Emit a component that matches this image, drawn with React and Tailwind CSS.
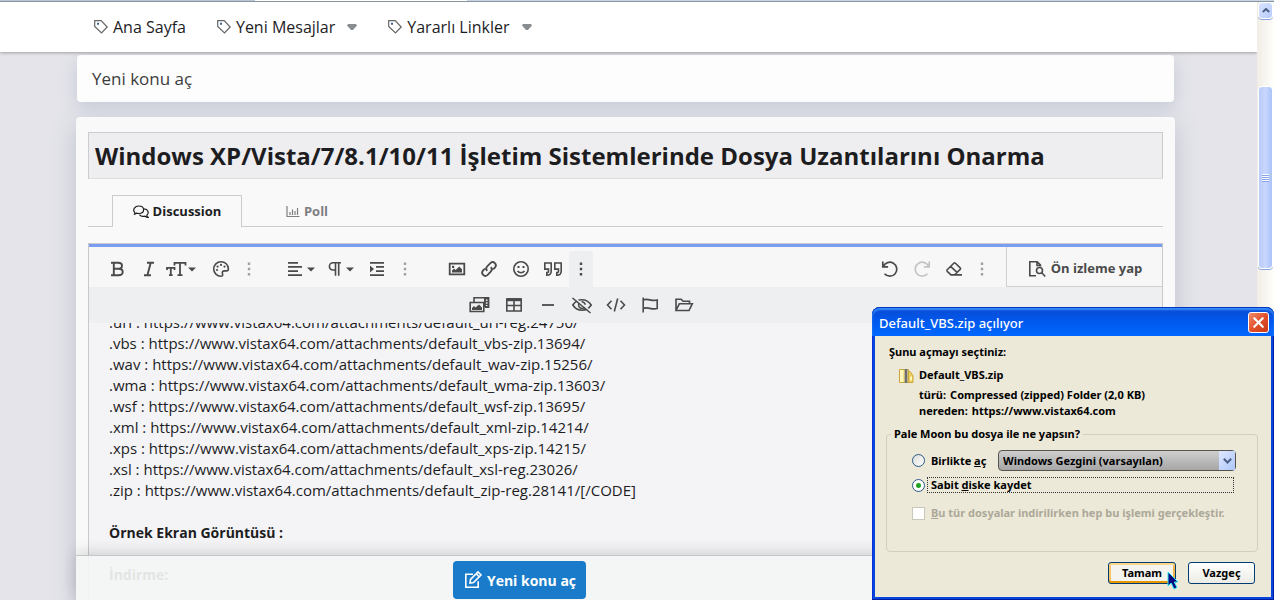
import { X } from "lucide-react";

const links = [
  ".url : https://www.vistax64.com/attachments/default_url-reg.24750/",
  ".vbs : https://www.vistax64.com/attachments/default_vbs-zip.13694/",
  ".wav : https://www.vistax64.com/attachments/default_wav-zip.15256/",
  ".wma : https://www.vistax64.com/attachments/default_wma-zip.13603/",
  ".wsf : https://www.vistax64.com/attachments/default_wsf-zip.13695/",
  ".xml : https://www.vistax64.com/attachments/default_xml-zip.14214/",
  ".xps : https://www.vistax64.com/attachments/default_xps-zip.14215/",
  ".xsl : https://www.vistax64.com/attachments/default_xsl-reg.23026/",
  ".zip : https://www.vistax64.com/attachments/default_zip-reg.28141/[/CODE]",
];

function Icon({ children, className = "size-5", box = "0 0 20 20" }) {
  return (
    <svg
      viewBox={box}
      className={className}
      fill="none"
      stroke="currentColor"
      strokeWidth="1.6"
      aria-hidden="true"
    >
      {children}
    </svg>
  );
}

const icons = {
  bold: (
    <Icon>
      <path d="M4 3.8h7.2c2.6 0 3.8 1.2 3.8 3s-1.3 3-3.8 3H6.500M4 16.200h7.500c2.800 0 4.200-1.200 4.200-3.200s-1.500-3.200-4.200-3.200M6.800 3.800v12.400" strokeWidth="1.9" />
    </Icon>
  ),
  italic: (
    <Icon>
      <path d="M8 3.800h7M5 16.200h7M11.700 3.800 8.400 16.200" strokeWidth="1.9" />
    </Icon>
  ),
  size: (
    <Icon className="h-5 w-8" box="0 0 32 20">
      <path d="M9.500 6.500V3.800h11v2.700M15 3.800v12.400M12.500 16.200h5M2 11V8.900h7.500V11M5.800 8.900v7.300M4 16.200h3.600" strokeWidth="1.8" />
      <path d="M23 8.500h8l-4 4z" fill="currentColor" stroke="none" />
    </Icon>
  ),
  palette: (
    <Icon>
      <path d="M10 2.700a7.300 7.300 0 1 0 0 14.600c1.700 0 2-1.300 1.500-2.400-.7-1.600.2-3 1.900-3h2.100c1.200 0 1.900-.7 1.900-1.900 0-4.200-3.300-7.300-7.400-7.300z" />
      <g fill="currentColor" stroke="none">
        <circle cx="6" cy="11" r="1.100" />
        <circle cx="6.600" cy="7.600" r="1.100" />
        <circle cx="10" cy="5.900" r="1.100" />
        <circle cx="13.500" cy="7.600" r="1.100" />
      </g>
    </Icon>
  ),
  dots: (
    <Icon>
      <path d="M8.800 3.500h2.400v2.400H8.800zM8.800 8.800h2.400v2.400H8.800zM8.800 14.100h2.400v2.400H8.800z" fill="currentColor" stroke="none" />
    </Icon>
  ),
  align: (
    <Icon className="h-5 w-8" box="0 0 32 20">
      <path d="M3 3.800h10M3 7.900h14M3 12.100h10M3 16.200h14" strokeWidth="1.8" />
      <path d="M22 8.500h8l-4 4z" fill="currentColor" stroke="none" />
    </Icon>
  ),
  paragraph: (
    <Icon className="h-5 w-8" box="0 0 32 20">
      <path d="M16 3.800H8a3.600 3.600 0 0 0 0 7.200h2.500M10.500 3.800v13M13.700 3.800v13" />
      <path d="M21 8.500h8l-4 4z" fill="currentColor" stroke="none" />
    </Icon>
  ),
  indent: (
    <Icon>
      <path d="M3 3.800h14M9 7.900h8M9 12.100h8M3 16.200h14" strokeWidth="1.8" />
      <path d="M3 6.500v7L7 10z" fill="currentColor" stroke="none" />
    </Icon>
  ),
  image: (
    <Icon>
      <path d="M2.700 4.700h14.600v10.600H2.700z" strokeWidth="1.8" />
      <path d="M5 13.500v-2l2-2 1.600 1.600 3.600-3.600 2.800 2.800v3.200zM5 6.800h2.200V9H5z" fill="currentColor" stroke="none" />
    </Icon>
  ),
  link: (
    <Icon>
      <path d="M8.200 11.800a3.200 3.200 0 0 1 0-4.500l3.400-3.400a3.200 3.200 0 0 1 4.500 4.500l-2 2M11.800 8.200a3.200 3.200 0 0 1 0 4.500l-3.400 3.400a3.200 3.200 0 0 1-4.500-4.500l2-2" strokeWidth="1.8" />
    </Icon>
  ),
  smile: (
    <Icon>
      <circle cx="10" cy="10" r="7.200" />
      <path d="M6.500 12c1.800 2.300 5.200 2.300 7 0" />
      <path d="M6.500 7h2v2h-2zM11.500 7h2v2h-2z" fill="currentColor" stroke="none" />
    </Icon>
  ),
  quote: (
    <Icon>
      <path d="M1.800 4h6.400v8c0 2.500-1.600 4.300-4.400 4.300v-2.700c1.200 0 1.700-.6 1.700-1.700v-1.800H1.800zM11.800 4h6.400v8c0 2.500-1.600 4.300-4.400 4.300v-2.700c1.200 0 1.700-.6 1.700-1.700v-1.800h-3.700z" />
    </Icon>
  ),
  undo: (
    <Icon>
      <path d="M2.800 2.500v5.300h5.300M3.300 7.600a7 7 0 1 1 1.200 7.200" strokeWidth="1.7" />
    </Icon>
  ),
  redo: (
    <Icon>
      <path d="M17.200 2.500v5.300h-5.300M16.700 7.600a7 7 0 1 0-1.200 7.200" strokeWidth="1.7" />
    </Icon>
  ),
  eraser: (
    <Icon>
      <path d="m7 15.800-3.800-3.500c-.5-.5-.5-1 0-1.500l6.600-6.500c.5-.5 1.100-.5 1.600 0l4.800 4.600c.5.500.5 1 0 1.500l-5.500 5.400M6.300 15.900H18M6.800 7.600l6.500 6" />
    </Icon>
  ),
  preview: (
    <Icon>
      <path d="M9 16.800H2.800V2.800h7.400l3.300 3.300v1.400M10 3v3.500h3.500" />
      <circle cx="12.500" cy="11.500" r="3" />
      <path d="m14.700 13.700 3.600 3.800" />
    </Icon>
  ),
  media: (
    <Icon className="h-5 w-6" box="0 0 24 20">
      <path d="M6 7V2.800h14.600v9.500H17M2.200 7.500h13.600v9H2.200z" />
      <path d="M4 15v-2l2-2 1.500 1.500L11 9.500l3 3V15zM16 2.800h5v9.500h-5z" fill="currentColor" stroke="none" />
      <path d="M18.700 4.500v6.500" stroke="#eeeff1" strokeDasharray="1.500 1.200" />
    </Icon>
  ),
  table: (
    <Icon>
      <path d="M2.800 4h14.400v12H2.800zM2.800 10.500h14.400M10 5v11" />
      <path d="M2.800 3.200h14.400v3H2.800z" fill="currentColor" stroke="none" />
    </Icon>
  ),
  rule: (
    <Icon>
      <path d="M4 10h12" strokeWidth="1.8" />
    </Icon>
  ),
  hidden: (
    <Icon className="h-5 w-6" box="0 0 24 20">
      <path d="M2.800 10c4.600-7 13.800-7 18.400 0-4.600 7-13.800 7-18.400 0z" />
      <path d="M9 8.500a3.300 3.300 0 0 0 6 3M11.500 6.800a3.300 3.300 0 0 1 3.700 3" />
      <path d="m3.500 2 18 15" stroke="#eeeff1" />
      <path d="m2.500 3 18 15" />
    </Icon>
  ),
  code: (
    <Icon>
      <path d="m5.500 5.800-4 4.200 4 4.200M14.500 5.800l4 4.200-4 4.200M11.700 3.500l-3.400 13" />
    </Icon>
  ),
  flag: (
    <Icon>
      <path d="M3.200 2.500v15M3.200 5c4.500-2.200 8.500 1.800 14 0v8.500c-5.500 1.800-9.500-2.200-14 0" />
    </Icon>
  ),
  folder: (
    <Icon>
      <path d="M2 15.500V4.300h5.200L9 6.200h6.500v2.600M2 15.500l3.300-6.700h13L15 15.500z" />
    </Icon>
  ),
};

function ToolButton({ icon, label, className = "w-8 text-[#4a4a4a]" }) {
  return (
    <button
      type="button"
      aria-label={label}
      className={`flex h-9 shrink-0 items-center justify-center ${className}`}
    >
      {icons[icon]}
    </button>
  );
}

function NavItem({ label, menu }) {
  return (
    <a href="#" className="flex items-center gap-1">
      <svg viewBox="0 0 16 16" className="size-4 text-[#666]" fill="none" stroke="currentColor" strokeWidth="1.2">
        <path d="M1.700 1.700h6.500l6 6.300-5.700 6-6.800-6.500z" />
        <path d="M4 3.700h2v2H4z" fill="#3b6290" stroke="none" />
      </svg>
      <span>{label}</span>
      {menu && (
        <svg viewBox="0 0 10 6" className="ml-2 h-[6px] w-[10px] text-[#8a8d90]" fill="currentColor">
          <path d="M1 0h8l1 1.500L6 6H4L0 1.500z" />
        </svg>
      )}
    </a>
  );
}

function Toolbar() {
  return (
    <div className="shrink-0 border-t-[3px] border-[#7c9ef2]">
      <div className="flex h-10 items-stretch bg-[#f7f7f7]">
        <div className="flex flex-1 items-end gap-6 pl-3">
          <div className="flex">
            <ToolButton icon="bold" label="Kalın" />
            <ToolButton icon="italic" label="İtalik" />
            <ToolButton icon="size" label="Yazı boyutu" className="mr-2 w-8 text-[#4a4a4a]" />
            <ToolButton icon="palette" label="Renk" />
            <ToolButton icon="dots" label="Diğer yazı seçenekleri" className="w-6 text-[#a0a0a0]" />
          </div>
          <div className="flex">
            <ToolButton icon="align" label="Hizalama" className="mr-2 w-8 text-[#4a4a4a]" />
            <ToolButton icon="paragraph" label="Paragraf" className="mr-1 w-8 text-[#4a4a4a]" />
            <ToolButton icon="indent" label="Girinti" />
            <ToolButton icon="dots" label="Diğer paragraf seçenekleri" className="w-6 text-[#a0a0a0]" />
          </div>
          <div className="flex">
            <ToolButton icon="image" label="Resim ekle" />
            <ToolButton icon="link" label="Bağlantı ekle" />
            <ToolButton icon="smile" label="İfadeler" />
            <ToolButton icon="quote" label="Alıntı" />
            <ToolButton icon="dots" label="Ekle" className="w-6 rounded-t bg-[#eeeff1] text-[#4a4a4a]" />
          </div>
          <div className="mr-3 ml-auto flex">
            <ToolButton icon="undo" label="Geri al" />
            <ToolButton icon="redo" label="Yinele" className="w-8 text-[#c4c4c4]" />
            <ToolButton icon="eraser" label="Biçimi temizle" />
            <ToolButton icon="dots" label="Diğer" className="w-6 text-[#a0a0a0]" />
          </div>
        </div>
        <button
          type="button"
          className="flex w-[156px] items-center justify-center gap-1 border-b border-l border-[#d0d0d0] pt-1 text-[13px] font-bold text-[#4a4a4a]"
        >
          {icons.preview}
          Ön izleme yap
        </button>
      </div>
      <div className="flex h-9 items-center bg-[#eeeff1] pl-[374px]">
        <ToolButton icon="media" label="Medya" className="w-[34px] text-[#4a4a4a]" />
        <ToolButton icon="table" label="Tablo" className="w-[34px] text-[#4a4a4a]" />
        <ToolButton icon="rule" label="Yatay çizgi" className="w-[34px] text-[#4a4a4a]" />
        <ToolButton icon="hidden" label="Spoiler" className="w-[34px] text-[#4a4a4a]" />
        <ToolButton icon="code" label="Kod" className="w-[34px] text-[#4a4a4a]" />
        <ToolButton icon="flag" label="Bayrak" className="w-[34px] text-[#4a4a4a]" />
        <ToolButton icon="folder" label="Taslaklar" className="w-[34px] text-[#4a4a4a]" />
      </div>
    </div>
  );
}

function Composer() {
  return (
    <main className="relative mr-[82px] ml-[76px] flex min-h-0 flex-1 flex-col rounded-t bg-[#f9f9f9] px-3 pt-[15px] shadow-[0_8px_24px_#bfc2cd]">
      <input
        aria-label="Konu başlığı"
        spellCheck={false}
        defaultValue="Windows XP/Vista/7/8.1/10/11 İşletim Sistemlerinde Dosya Uzantılarını Onarma"
        className="h-[47px] w-full shrink-0 border border-[#cccccf] border-b-[#dddde0] bg-[#eeeef1] px-[6px] text-[24px] font-bold text-[#1d1d1f] outline-none"
      />
      <div role="tablist" className="mt-4 flex h-8 shrink-0 text-[13px] font-bold">
        <span className="w-6 border-b border-[#ccc]" />
        <button
          type="button"
          role="tab"
          aria-selected="true"
          className="flex w-[130px] items-center justify-center gap-1 border border-b-0 border-[#ccc] pt-px text-[#1d1d1f]"
        >
          <svg viewBox="0 0 16 14" className="h-[14px] w-4" fill="none" stroke="currentColor" strokeWidth="1.2">
            <path d="M1 9.500c1-.7 1-1.300.8-1.800C-.8 4.500 2 1 5.800 1c6.400 0 6.400 7.500 0 7.500-1 0-1.500-.1-2.200-.4-.8.8-1.700 1.300-2.600 1.400z" />
            <path d="M11 3.800c4 .2 5.500 4 2.800 6.300 0 1 .5 1.600 1.200 2.200-1.200 0-2-.3-3-1.100-2.600.6-4.600 0-5.500-1.600" />
          </svg>
          Discussion
        </button>
        <div className="flex flex-1 border-b border-[#ccc]">
          <button
            type="button"
            role="tab"
            aria-selected="false"
            className="flex w-[130px] items-center justify-center gap-1 pt-[2px] text-[#7e7e82]"
          >
            <svg viewBox="0 0 14 12" className="h-3 w-[14px]" fill="none" stroke="currentColor" strokeWidth="1.2">
              <path d="M1 0v10.500h12.500M4 9V6M6.500 9V3.500M9 9V5M11.500 9V2" />
            </svg>
            Poll
          </button>
        </div>
      </div>
      <div className="mt-4 flex min-h-0 flex-1 flex-col border border-b-0 border-[#c9c9cc]">
        <Toolbar />
        <div className="min-h-0 flex-1 overflow-hidden bg-[#f4f4f7] px-5">
          <div
            contentEditable
            suppressContentEditableWarning
            spellCheck={false}
            role="textbox"
            aria-multiline="true"
            aria-label="Mesaj"
            className="-mt-[11px] text-[15px] leading-[21px] text-[#1d1d1f] outline-none"
          >
            {links.map((line) => (
              <p key={line}>{line}</p>
            ))}
            <p className="mt-[21px] text-[14px] font-bold">Örnek Ekran Görüntüsü :</p>
            <p className="mt-[21px] text-[14px] font-bold">İndirme:</p>
          </div>
        </div>
      </div>
      <div className="absolute inset-x-0 bottom-0 flex h-[45px] items-start border-t border-[#c6c6c8] bg-[#f3f5f4]/92 pt-[5px] pl-[377px] shadow-[0_-2px_14px_rgba(0,0,0,0.16)]">
        <button
          type="button"
          className="flex h-[38px] w-[133px] items-center justify-center gap-1 rounded bg-[#197bc9] text-[14px] font-bold text-white"
        >
          <Icon>
            <path d="M10 4.200H2.800v13h12.400v-6" />
            <path d="m7 13 .5-3.500L15 2l3 3-7.500 7.500zM13.300 3.800l2.900 2.900" />
          </Icon>
          Yeni konu aç
        </button>
      </div>
    </main>
  );
}

function Scrollbar() {
  return (
    <div className="w-[17px] shrink-0 bg-gradient-to-r from-[#f0ede5] to-[#fefefb] px-px">
      <div className="flex h-[17px] items-center justify-center rounded-sm border border-white bg-gradient-to-br from-[#d8e4ff] to-[#b7cbfb] shadow-[0_1px_0_#8aa6dc]">
        <svg viewBox="0 0 8 5" className="h-[5px] w-2" fill="none" stroke="#4d6185" strokeWidth="2">
          <path d="m.8 4 3.200-3 3.200 3" />
        </svg>
      </div>
      <div className="mt-[67px] flex h-[183px] flex-col items-center justify-center rounded-sm border border-white bg-gradient-to-r from-[#b9cbfb] via-[#c8d7fd] to-[#abc3f9] shadow-[0_1px_0_#8aa6dc]">
        {[0, 1, 2, 3].map((n) => (
          <span key={n} className="h-[2px] w-[7px] border-b border-[#86a5e8] bg-white" />
        ))}
      </div>
    </div>
  );
}

function DownloadDialog() {
  return (
    <section
      role="dialog"
      aria-labelledby="dialog-title"
      className="absolute right-0 bottom-0 flex h-[293px] w-[402px] flex-col rounded-t-lg bg-[#0646dc] px-[3px] pb-[3px] font-['Noto_Sans',sans-serif] text-[11px] leading-4 font-bold text-black shadow-[inset_-1px_-1px_0_#001ea0,inset_1px_1px_0_#0831d9]"
    >
      <header className="-mx-[3px] flex h-[29px] shrink-0 items-center justify-between rounded-t-lg bg-gradient-to-b from-[#0a4bd0] via-[#0058ee] to-[#0068ff] pt-[2px] pr-[5px] pl-[7px] shadow-[inset_0_1px_0_#0037b8,inset_0_3px_2px_#3c8cff]">
        <h2 id="dialog-title" className="text-[13px] font-medium text-white">
          Default_VBS.zip açılıyor
        </h2>
        <button
          type="button"
          aria-label="Kapat"
          className="flex size-[21px] items-center justify-center rounded-[3px] border border-white bg-gradient-to-br from-[#f0896a] via-[#e2502c] to-[#c93a12] text-white"
        >
          <X size={17} strokeWidth={3} />
        </button>
      </header>
      <form className="flex flex-1 flex-col bg-[#ece9d8] pt-2 pr-[13px] pl-[11px]">
        <p className="pl-[3px]">Şunu açmayı seçtiniz:</p>
        <div className="mt-[7px] flex pl-[12px]">
          <svg viewBox="0 0 16 16" className="mt-px mr-[5px] size-4">
            <path d="M1.500 1.500h9v13h-9z" fill="#f7e58a" stroke="#c9a63c" />
            <path d="M2 2h3v12H2z" fill="#fdf6bd" />
            <path d="M10.500 3.500h1.500l3 4v7h-4.500z" fill="#edcf5c" stroke="#c9a63c" />
            <path d="M12 8.500h2v4h-2z" fill="#fdf6bd" />
            <path d="M8 1v14" stroke="#8f8f8f" strokeWidth="3" />
            <path d="M8 1.500v13" stroke="#3f3f3f" strokeWidth="1.6" strokeDasharray="1 1" />
          </svg>
          <div>
            <p className="mb-1">Default_VBS.zip</p>
            <dl>
              <div className="flex gap-1">
                <dt>türü:</dt>
                <dd>Compressed (zipped) Folder (2,0 KB)</dd>
              </div>
              <div className="flex gap-1">
                <dt>nereden:</dt>
                <dd>https://www.vistax64.com</dd>
              </div>
            </dl>
          </div>
        </div>
        <fieldset className="mt-[7px] h-[126px] min-w-0 rounded border border-[#d0d0bf]">
          <legend className="ml-1 px-[3px]">Pale Moon bu dosya ile ne yapsın?</legend>
          <div className="mt-2 flex h-[21px] items-center pl-[25px]">
            <input
              id="open-with"
              type="radio"
              name="action"
              className="mr-[6px] size-[13px] appearance-none rounded-full border border-[#2a5a88] bg-gradient-to-br from-[#dcdcd7] to-white"
            />
            <label htmlFor="open-with" className="w-[67px]">
              Birlikte <span className="underline">a</span>ç
            </label>
            <div className="relative">
              <select
                aria-label="Uygulama"
                className="block h-[21px] w-[238px] appearance-none rounded-sm border border-[#55544f] bg-gradient-to-b from-[#cfcfcf] to-[#a6a6a6] pl-1 font-bold"
              >
                <option>Windows Gezgini (varsayılan)</option>
              </select>
              <span className="pointer-events-none absolute top-px right-px flex h-[19px] w-4 items-center justify-center bg-gradient-to-br from-[#dfe8ff] to-[#aec6fa]">
                <svg viewBox="0 0 9 6" className="h-[6px] w-[9px]" fill="none" stroke="#4d6185" strokeWidth="2">
                  <path d="m.8.8 3.700 3.700L8.200.8" />
                </svg>
              </span>
            </div>
          </div>
          <div className="mt-[6px] flex h-4 items-center pl-[25px]">
            <input
              id="save"
              type="radio"
              name="action"
              defaultChecked
              className="mr-[2px] size-[13px] appearance-none rounded-full border border-[#2a5a88] bg-white bg-[radial-gradient(circle,#21a121_0_2px,#ffffff_3px)]"
            />
            <label htmlFor="save" className="flex h-4 w-[307px] items-center border border-dotted border-[#333] pl-[3px]">
              <span>
                Sabit <span className="underline">d</span>iske kaydet
              </span>
            </label>
          </div>
          <div className="mt-3 flex h-4 items-center pl-[25px] text-[#aca899]">
            <input
              id="always"
              type="checkbox"
              disabled
              className="mr-[6px] size-[13px] appearance-none border border-[#cac8bb] bg-white"
            />
            <label htmlFor="always" className="whitespace-nowrap">
              <span className="underline">B</span>u tür dosyalar indirilirken hep bu işlemi gerçekleştir.
            </label>
          </div>
        </fieldset>
        <div className="mt-[10px] flex justify-end gap-3 pr-[3px]">
          <div className="relative">
            <button
              type="button"
              className="h-[22px] w-[68px] rounded-[3px] border border-[#003c74] bg-[#f4f3ee] font-bold shadow-[inset_0_2px_0_#fdd889,inset_0_-2px_0_#e59700,inset_2px_0_0_#f9c76b,inset_-2px_0_0_#f3b548]"
            >
              Tamam
            </button>
            <svg viewBox="0 0 12 19" className="pointer-events-none absolute top-[9px] left-[59px] h-[19px] w-3">
              <path d="M1 1v14l3.200-3 2.800 6 3-1.500L7.200 11H11z" fill="#04047c" stroke="#35e6f2" />
            </svg>
          </div>
          <button
            type="button"
            className="h-[22px] w-[67px] rounded-[3px] border border-[#003c74] bg-gradient-to-b from-white to-[#ecebe5] font-bold"
          >
            Vazgeç
          </button>
        </div>
      </form>
    </section>
  );
}

export default function App() {
  return (
    <div className="relative flex h-screen flex-col overflow-hidden bg-[#e4e4ea] font-['Open_Sans',sans-serif] text-[#1d1d1f]">
      <div className="flex h-[2px] shrink-0 border-b border-[#8995a3]">
        <span className="w-1/5 bg-[#b9c5d3]" />
        <span className="w-1/6 bg-white" />
        <span className="flex-1 bg-[#c9d5e2]" />
      </div>
      <div className="flex min-h-0 flex-1">
        <div className="flex min-w-0 flex-1 flex-col overflow-hidden">
          <nav className="relative z-10 flex h-[50px] shrink-0 items-center gap-[30px] bg-white pl-[93px] text-[16px] shadow-[0_1px_3px_rgba(0,0,0,0.3)]">
            <NavItem label="Ana Sayfa" />
            <NavItem label="Yeni Mesajlar" menu />
            <NavItem label="Yararlı Linkler" menu />
          </nav>
          <h1 className="mt-[3px] mr-[83px] mb-[15px] ml-[77px] flex h-[47px] shrink-0 items-center rounded bg-[#fdfdfd] pl-[15px] text-[17px] text-[#3c3c3c] shadow-[0_6px_18px_#c6cad6]">
            Yeni konu aç
          </h1>
          <Composer />
        </div>
        <Scrollbar />
      </div>
      <DownloadDialog />
    </div>
  );
}
